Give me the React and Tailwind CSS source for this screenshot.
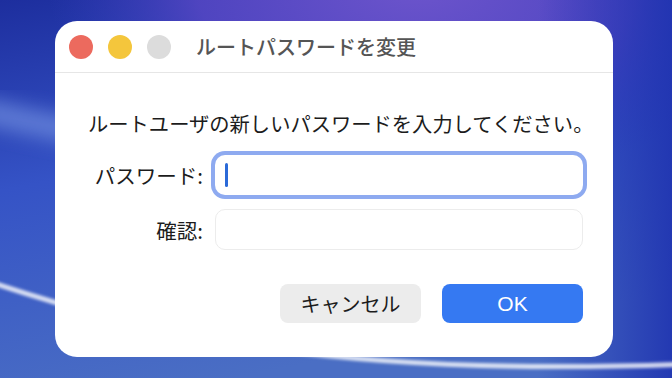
import React from "react";

const jp = { fontFamily: '"Noto Sans CJK JP", "Noto Sans", sans-serif' };

function Wallpaper() {
  return (
    <svg
      className="absolute inset-0"
      width="672"
      height="378"
      viewBox="0 0 672 378"
    >
      <defs>
        <linearGradient id="base" x1="0" y1="0" x2="0.35" y2="1">
          <stop offset="0" stopColor="#1d2e9e" />
          <stop offset="0.45" stopColor="#3553c6" />
          <stop offset="1" stopColor="#4a6ec4" />
        </linearGradient>
        <radialGradient id="purple" cx="0.62" cy="-0.05" r="0.55">
          <stop offset="0" stopColor="#6e55cc" />
          <stop offset="0.6" stopColor="#5a48c6" stopOpacity="0.8" />
          <stop offset="1" stopColor="#3a3fc0" stopOpacity="0" />
        </radialGradient>
        <linearGradient id="right" x1="0" y1="0" x2="1" y2="0">
          <stop offset="0.8" stopColor="#1f33b0" stopOpacity="0" />
          <stop offset="1" stopColor="#1f33b0" stopOpacity="0.9" />
        </linearGradient>
        <filter id="blur" x="-0.2" y="-0.5" width="1.4" height="2">
          <feGaussianBlur stdDeviation="1.6" />
        </filter>
        <filter id="blur2" x="-0.2" y="-0.5" width="1.4" height="2">
          <feGaussianBlur stdDeviation="10" />
        </filter>
      </defs>
      <rect width="672" height="378" fill="url(#base)" />
      <rect width="672" height="378" fill="url(#purple)" />
      <rect width="672" height="378" fill="url(#right)" />
      <path
        d="M -20 110 C 60 130, 120 140, 200 150"
        stroke="#7896e4"
        strokeWidth="24"
        fill="none"
        opacity="0.7"
        filter="url(#blur2)"
      />
      <path
        d="M -10 282 C 150 335, 330 378, 690 364"
        stroke="#ffffff"
        strokeWidth="5"
        fill="none"
        opacity="0.8"
        filter="url(#blur)"
      />
    </svg>
  );
}

function Light({ color }) {
  return <div className={`w-6 h-6 rounded-full ${color}`} />;
}

export default function App() {
  return (
    <div className="relative w-[672px] h-[378px] overflow-hidden" style={jp}>
      <Wallpaper />

      <div className="relative ml-[55px] mt-[21px] w-[558px] h-[336px] rounded-[22px] bg-white flex flex-col">
        {/* title bar */}
        <div className="h-[52px] flex items-center pl-[14px] border-b border-[#e6e6e6]">
          <div className="flex gap-[15px]">
            <Light color="bg-[#ec6a5e]" />
            <Light color="bg-[#f4c63c]" />
            <Light color="bg-[#dcdcdc]" />
          </div>
          <span className="ml-[25px] text-[20px] font-medium text-[#555555] leading-7">
            ルートパスワードを変更
          </span>
        </div>

        {/* body */}
        <div className="flex flex-col pl-[33px] pr-[30px] pt-[36px]">
          <p className="text-[20.3px] leading-7 text-[#1c1c1c] whitespace-nowrap">
            ルートユーザの新しいパスワードを入力してください。
          </p>

          <div className="mt-[18px] flex items-center">
            <label className="w-[115px] text-right text-[20.5px] leading-7 text-[#1c1c1c]">
              パスワード:
            </label>
            <div className="ml-[12px] w-[368px] h-[40px] rounded-[10px] bg-white ring-4 ring-[#8eaaf0] flex items-center pl-[10px]">
              <div className="w-[3px] h-[24px] rounded-full bg-[#2b6ad8]" />
            </div>
          </div>

          <div className="mt-[14px] flex items-center">
            <label className="w-[115px] text-right text-[20.5px] leading-7 text-[#1c1c1c]">
              確認:
            </label>
            <div className="ml-[12px] w-[368px] h-[41px] rounded-[10px] bg-white border border-[#ececec]" />
          </div>

          <div className="mt-[34px] flex justify-end gap-[21px]">
            <button className="w-[141px] h-[39px] rounded-[8px] bg-[#ececec] text-[20px] text-[#1c1c1c]">
              キャンセル
            </button>
            <button
              className="w-[141px] h-[39px] rounded-[8px] bg-[#3579f2] text-[21px] font-medium text-white"
              style={{ fontFamily: '"Liberation Sans", Arial, sans-serif' }}
            >
              OK
            </button>
          </div>
        </div>
      </div>
    </div>
  );
}
